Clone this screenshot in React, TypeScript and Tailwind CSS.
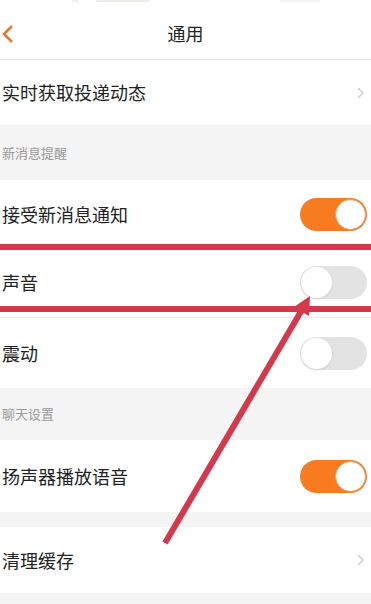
import React from "react";

const font = { fontFamily: '"Noto Sans CJK SC", "Noto Sans", sans-serif' };

function Chevron() {
  return (
    <svg width="10" height="16" viewBox="0 0 10 16" className="mr-[6px]">
      <polyline points="3,3 8,8 3,13" fill="none" stroke="#cfcfcf" strokeWidth="1.5" />
    </svg>
  );
}

function Toggle({ on }: { on: boolean }) {
  return on ? (
    <div className="w-[67px] h-[33px] rounded-full bg-[#f97b1f] flex items-center justify-end p-[1px] mr-[4px]">
      <div className="w-[31px] h-[31px] rounded-full bg-white border border-[#d9a070]" />
    </div>
  ) : (
    <div className="w-[67px] h-[33px] rounded-full bg-[#e3e3e3] flex items-center justify-start p-[1px] mr-[4px]">
      <div className="w-[31px] h-[31px] rounded-full bg-white shadow-[0_1px_3px_rgba(0,0,0,0.1)]" />
    </div>
  );
}

function Row({ label, h, right, border }: { label: string; h: string; right: React.ReactNode; border?: boolean }) {
  return (
    <div className={`${h} bg-white flex items-center justify-between pl-[2px] ${border ? "border-b border-[#ececec]" : ""}`}>
      <span className="text-[18px] text-[#222]">{label}</span>
      {right}
    </div>
  );
}

export default function App() {
  return (
    <div className="relative w-full h-[604px] bg-[#f4f4f4] overflow-hidden" style={font}>
      <div className="h-[8px] bg-white flex items-start">
        <div className="ml-[72px] mt-[-1px] w-[6px] h-[3px] bg-[#eee]" />
        <div className="ml-[18px] mt-[-1px] w-[54px] h-[3px] rounded-full bg-[#f0ebe8]" />
        <div className="ml-[130px] mt-[-1px] w-[40px] h-[3px] bg-[#f4f4f4]" />
      </div>

      <div className="relative h-[52px] bg-white border-b border-[#e4e4e4] flex items-center justify-center">
        <svg width="14" height="18" viewBox="0 0 14 18" className="absolute left-[1px] top-[17px]">
          <polyline points="11,1 3,9 11,17" fill="none" stroke="#e27a35" strokeWidth="2.6" />
        </svg>
        <span className="text-[18px] text-[#222]">通用</span>
      </div>

      <Row label="实时获取投递动态" h="h-[65px]" right={<Chevron />} />

      <div className="h-[55px] flex items-center pl-[2px]">
        <span className="text-[13px] text-[#9a9a9a]">新消息提醒</span>
      </div>

      <Row label="接受新消息通知" h="h-[68px]" right={<Toggle on />} />
      <Row label="声音" h="h-[70px]" right={<Toggle on={false} />} border />
      <Row label="震动" h="h-[70px]" right={<Toggle on={false} />} />

      <div className="h-[52px] flex items-center pl-[2px]">
        <span className="text-[13px] text-[#9a9a9a]">聊天设置</span>
      </div>

      <Row label="扬声器播放语音" h="h-[72px]" right={<Toggle on />} />

      <div className="h-[15px]" />

      <Row label="清理缓存" h="h-[66px]" right={<Chevron />} />

      {/* annotation */}
      <div className="absolute left-0 top-[244px] w-full h-[6px] bg-[#d6384b]" />
      <div className="absolute left-0 top-[306px] w-full h-[6px] bg-[#d6384b]" />
      <svg className="absolute left-0 top-0" width="371" height="604" viewBox="0 0 371 604">
        <line x1="165" y1="543" x2="303" y2="308" stroke="#d6384b" strokeWidth="6" />
        <polygon points="310,296 309,316 294,307" fill="#d6384b" />
      </svg>
    </div>
  );
}
